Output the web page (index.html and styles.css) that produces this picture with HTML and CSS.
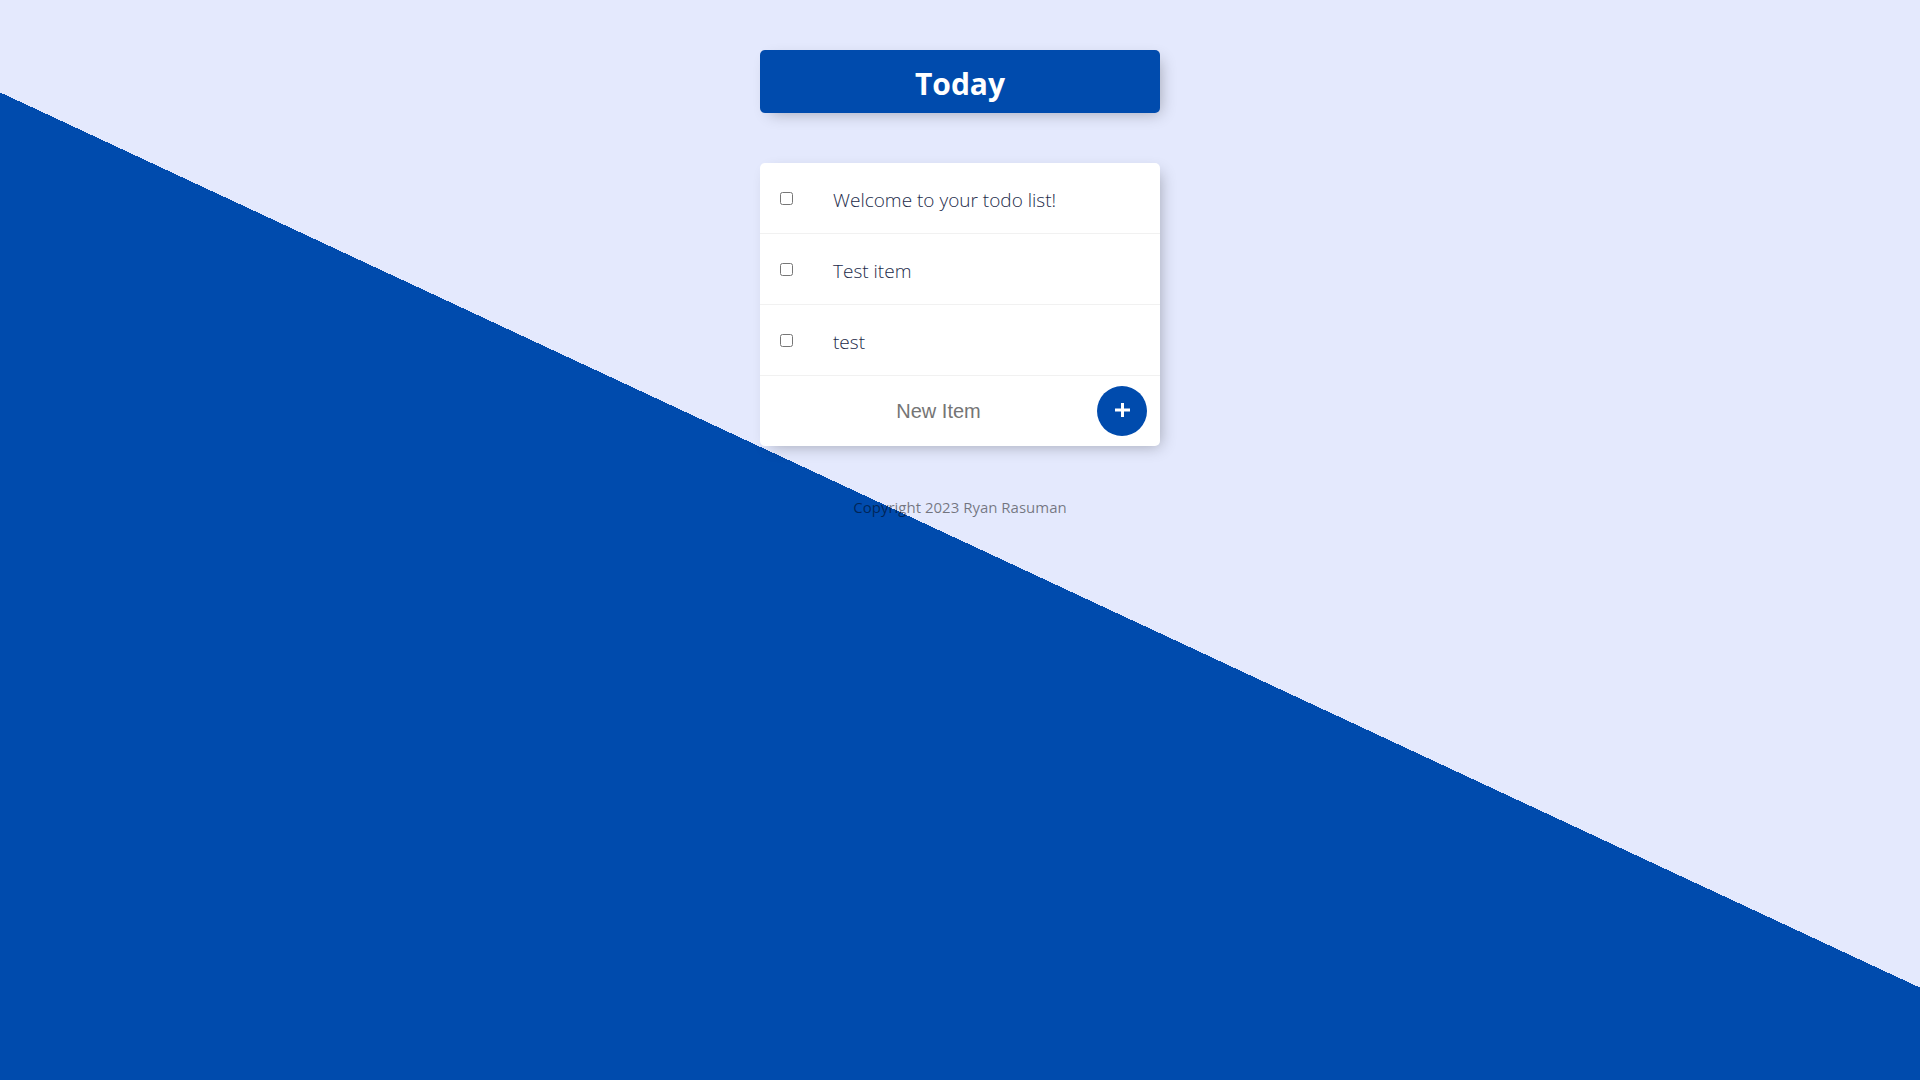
FILE: index.html
```html
<!DOCTYPE html>
<html lang="en">
<head>
  <meta charset="utf-8">
  <meta name="viewport" content="width=device-width, initial-scale=1">
  <title>To Do List</title>
  <link rel="stylesheet" href="styles.css">
</head>
<body>
  <header class="box heading">
    <h1>Today</h1>
  </header>
  <main class="box">
    <label class="item">
      <input type="checkbox" name="done">
      <span>Welcome to your todo list!</span>
    </label>
    <label class="item">
      <input type="checkbox" name="done">
      <span>Test item</span>
    </label>
    <label class="item">
      <input type="checkbox" name="done">
      <span>test</span>
    </label>
    <form class="new-item">
      <input type="text" name="newItem" placeholder="New Item" aria-label="New Item" autocomplete="off">
      <button type="submit" aria-label="Add item">
        <svg viewBox="0 0 16 16" width="16" height="16" aria-hidden="true"><path d="M8.5 0v14M1 7h15" fill="none" stroke="currentColor" stroke-width="3"/></svg>
      </button>
    </form>
  </main>
  <footer>Copyright 2023 Ryan Rasuman</footer>
</body>
</html>
```
FILE: styles.css
```css
* {
  box-sizing: border-box;
}

html {
  min-height: 100vh;
  background-color: #e4e9fd;
  background-image: linear-gradient(-155deg, #e4e9fd 50%, #004bad 50%);
}

body {
  display: flex;
  flex-direction: column;
  align-items: center;
  gap: 50px;
  margin: 0;
  padding: 50px 16px;
  font-family: "Segoe UI", "Open Sans", "Noto Sans", sans-serif;
}

.box {
  width: 100%;
  max-width: 400px;
  overflow: hidden;
  background: #fff;
  border-radius: 5px;
  box-shadow: 5px 5px 15px -5px rgba(0, 0, 0, 0.3);
}

.heading {
  padding: 12px 10px 8px;
  background: #004bad;
  color: #fff;
  text-align: center;
}

h1 {
  margin: 0;
  font-size: 30px;
  line-height: 43px;
}

.item {
  display: flex;
  align-items: center;
  gap: 40px;
  min-height: 71px;
  padding: 0 20px;
  border-bottom: 1px solid #f1f1f1;
  color: #1c2b4a;
  font-size: 19px;
  font-weight: 300;
}

.item input {
  flex: none;
  width: 13px;
  height: 13px;
  margin: 0;
}

.item span {
  padding-top: 4px;
}

.new-item {
  display: flex;
  align-items: center;
  min-height: 70px;
  padding: 0 13px 0 20px;
}

.new-item input {
  flex: 1;
  min-width: 0;
  height: 60px;
  padding: 0;
  border: 0;
  outline: 0;
  background: transparent;
  font-family: "Liberation Sans", Arial, sans-serif;
  font-size: 20px;
  text-align: center;
}

.new-item button {
  display: flex;
  flex: none;
  align-items: center;
  justify-content: center;
  width: 50px;
  height: 50px;
  padding: 0;
  border: 0;
  border-radius: 50%;
  background: #004bad;
  color: #fff;
  cursor: pointer;
}

footer {
  color: rgba(0, 0, 0, 0.5);
  font-size: 15px;
  line-height: 23px;
  text-align: center;
}
```
